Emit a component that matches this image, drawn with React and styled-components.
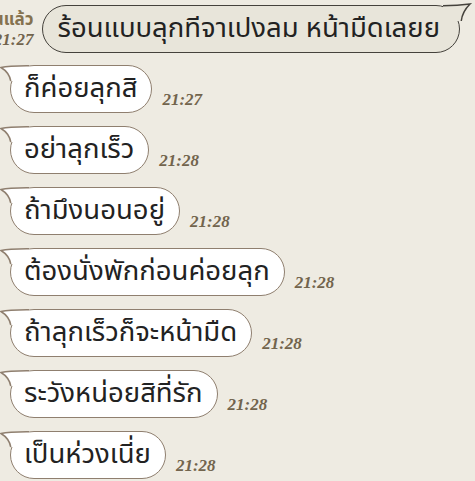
import React from "react";
import styled, { createGlobalStyle } from "styled-components";

const GlobalStyle = createGlobalStyle`
  html, body {
    margin: 0;
    padding: 0;
    background: #eeebe2;
    overflow: hidden;
  }
`;

const Page = styled.div`
  width: 475px;
  height: 481px;
  box-sizing: border-box;
  padding-top: 5px;
  background: #eeebe2;
  display: flex;
  flex-direction: column;
  font-family: "Noto Sans Thai", "Noto Sans", "DejaVu Sans", sans-serif;
  overflow: hidden;
`;

const SentRow = styled.div`
  display: flex;
  align-items: center;
  justify-content: flex-end;
  padding-right: 15px;
`;

const Meta = styled.div`
  display: flex;
  flex-direction: column;
  align-items: flex-end;
  gap: 1px;
  margin: 0 8px 0 0;
  white-space: nowrap;
`;

const ReadText = styled.span`
  font-size: 17px;
  line-height: 19px;
  font-weight: 700;
  color: #85724f;
`;

const Time = styled.span`
  font-family: "Liberation Serif", "Times New Roman", serif;
  font-style: italic;
  font-weight: 700;
  font-size: 17px;
  line-height: 17px;
  color: #72644d;
  margin: ${(p) => (p.$side ? "0 0 5px 10px" : "0")};
`;

const Row = styled.div`
  display: flex;
  align-items: flex-end;
  padding-left: 10px;
  margin-top: ${(p) => (p.$first ? 12 : 13)}px;
`;

const Bubble = styled.div`
  position: relative;
  height: 48px;
  box-sizing: border-box;
  display: flex;
  align-items: center;
  padding: ${(p) => (p.$sent ? "0 19px 0 15px" : "0 14px 0 13px")};
  border-radius: 24px;
  border: 1.5px solid ${(p) => (p.$sent ? "#45423c" : "#8f7f6f")};
  background: ${(p) => (p.$sent ? "#e8e5da" : "#ffffff")};
  font-size: 27.5px;
  color: #222222;
  white-space: nowrap;
`;

const Label = styled.span`
  position: relative;
  z-index: 1;
  margin-top: -2px;
`;

const Tail = styled.svg`
  position: absolute;
  top: -3.5px;
  ${(p) => (p.$sent ? "right: -13.5px;" : "left: -12.5px;")}
  width: 34px;
  height: 24px;
  overflow: visible;
`;

/* bubble's outer top-left corner sits at (11, 2) in these coordinates */
const ReceivedTail = () => (
  <Tail viewBox="0 0 34 24">
    <path
      d="M30 2.75 C20 2.75 10 2.6 2 4.5 C7 7.5 10.6 11.5 11.75 18 L30 18 Z"
      fill="#ffffff"
    />
    <path
      d="M30 2.75 C20 2.75 10 2.6 2 4.5 C7 7.5 10.6 11.5 11.75 18"
      fill="none"
      stroke="#8f7f6f"
      strokeWidth="1.5"
    />
  </Tail>
);

/* mirrored: bubble's outer top-right corner sits at (23, 2) */
const SentTail = () => (
  <Tail $sent viewBox="0 0 34 24">
    <path
      d="M4 2.75 C14 2.75 24 2 31 1 C26 6 23 11 22.25 18 L4 18 Z"
      fill="#e8e5da"
    />
    <path
      d="M4 2.75 C14 2.75 24 2 31 1 C26 6 23 11 22.25 18"
      fill="none"
      stroke="#45423c"
      strokeWidth="1.5"
    />
  </Tail>
);

const messages = [
  { text: "ก็ค่อยลุกสิ", time: "21:27" },
  { text: "อย่าลุกเร็ว", time: "21:28" },
  { text: "ถ้ามึงนอนอยู่", time: "21:28" },
  { text: "ต้องนั่งพักก่อนค่อยลุก", time: "21:28" },
  { text: "ถ้าลุกเร็วก็จะหน้ามืด", time: "21:28" },
  { text: "ระวังหน่อยสิที่รัก", time: "21:28" },
  { text: "เป็นห่วงเนี่ย", time: "21:28" },
];

export default function App() {
  return (
    <Page>
      <GlobalStyle />
      <SentRow>
        <Meta>
          <ReadText>อ่านแล้ว</ReadText>
          <Time>21:27</Time>
        </Meta>
        <Bubble $sent>
          <SentTail />
          <Label>ร้อนแบบลุกทีจาเปงลม หน้ามืดเลยย</Label>
        </Bubble>
      </SentRow>
      {messages.map((m, i) => (
        <Row key={i} $first={i === 0}>
          <Bubble>
            <ReceivedTail />
            <Label>{m.text}</Label>
          </Bubble>
          <Time $side>{m.time}</Time>
        </Row>
      ))}
    </Page>
  );
}
